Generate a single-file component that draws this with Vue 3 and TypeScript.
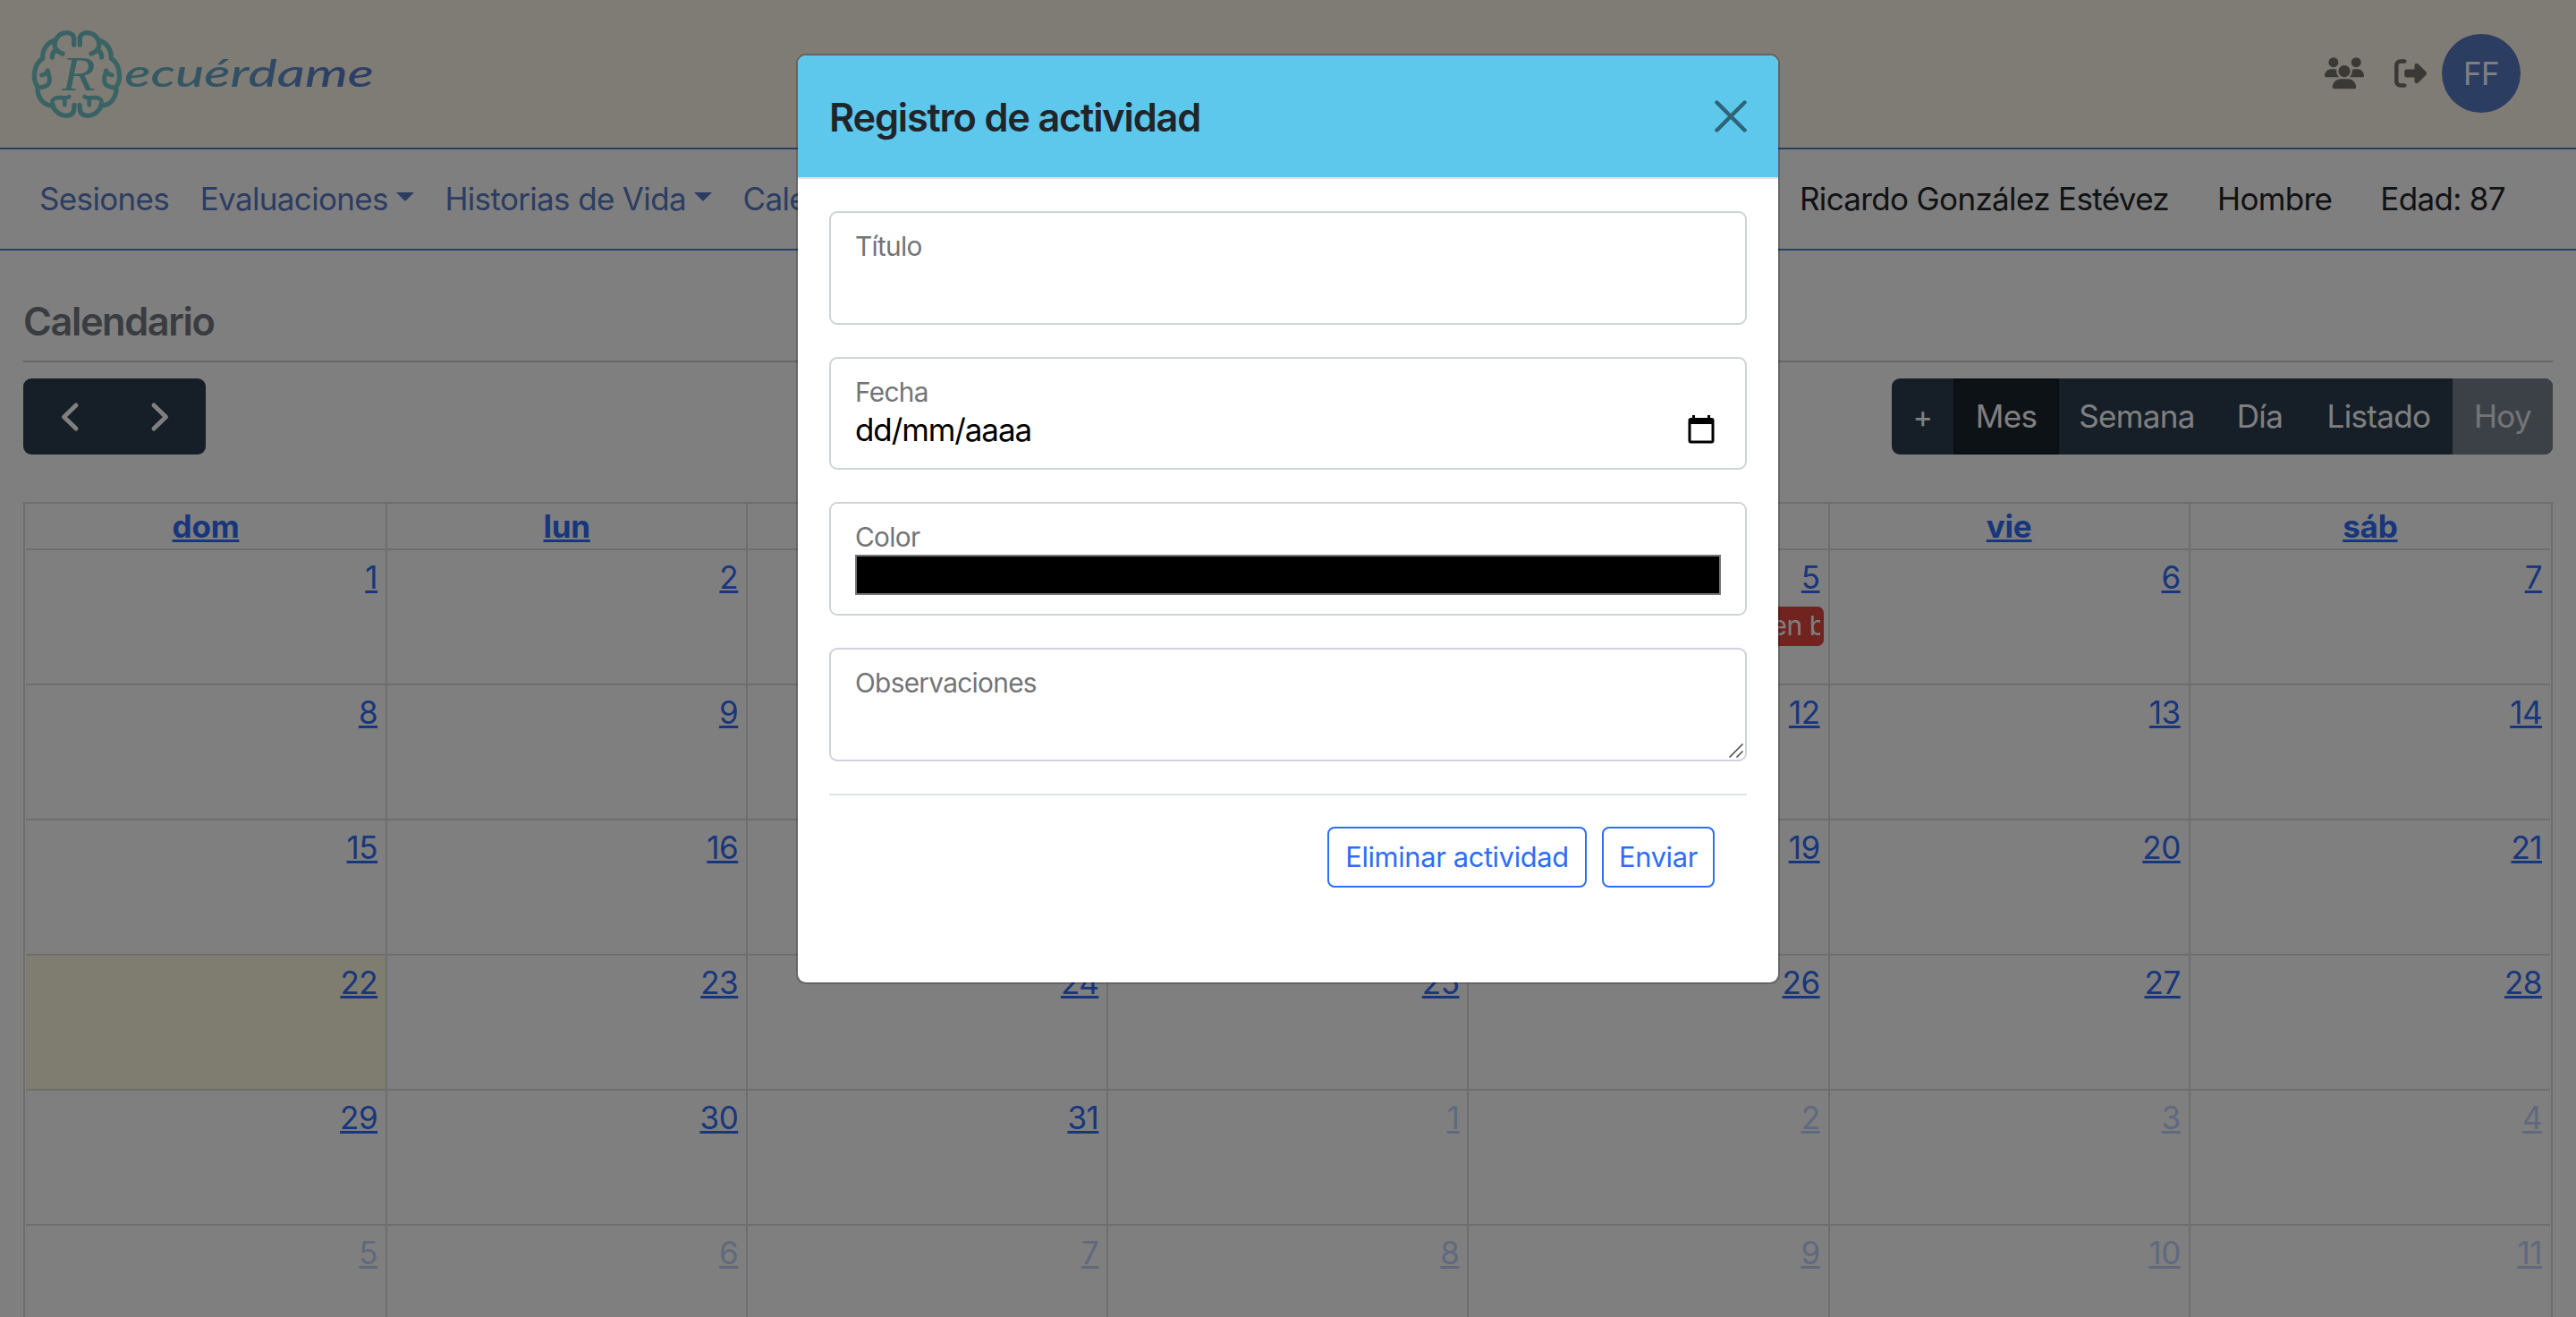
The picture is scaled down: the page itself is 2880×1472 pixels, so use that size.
<script setup lang="ts">
interface Day {
  n: number
  other?: boolean
  today?: boolean
  event?: string
}

const weekdays: string[] = ['dom', 'lun', 'mar', 'mié', 'jue', 'vie', 'sáb']

const weeks: Day[][] = Array.from({ length: 6 }, (_, w) =>
  Array.from({ length: 7 }, (_, d) => {
    const i = w * 7 + d + 1
    const day: Day = i > 31 ? { n: i - 31, other: true } : { n: i }
    if (i === 22) day.today = true
    if (i === 5) day.event = 'en b'
    return day
  }),
)

const views = [
  { label: '+', cls: 'v-add' },
  { label: 'Mes', cls: 'v-month' },
  { label: 'Semana', cls: 'v-week' },
  { label: 'Día', cls: 'v-day' },
  { label: 'Listado', cls: 'v-list' },
  { label: 'Hoy', cls: 'v-today' },
]
</script>

<template>
  <div class="page">
    <header class="top">
      <svg class="logo" viewBox="0 0 1290 495" width="430" height="165">
        <defs>
          <linearGradient id="brand" gradientUnits="userSpaceOnUse" x1="110" y1="0" x2="1250" y2="0">
            <stop offset="0" stop-color="#76cac8" />
            <stop offset="0.3" stop-color="#6cb8c8" />
            <stop offset="0.6" stop-color="#64a0c8" />
            <stop offset="0.9" stop-color="#5a7ccc" />
          </linearGradient>
          <g id="lobe">
            <path d="M248 150V128C246 104 202 102 187 134C158 142 142 166 143 196C112 216 108 268 126 290C124 330 146 352 174 354C192 384 214 392 234 386C247 382 248 372 249 352" stroke-width="16" />
            <path d="M185 140C180 156 187 172 210 180M186 168C178 176 174 184 175 192" stroke-width="16" />
            <path d="M140 252C152 248 158 246 160 236C162 250 168 258 166 270C166 284 152 292 132 294" stroke-width="15" />
            <path d="M232 324C226 334 200 322 184 330C172 336 174 346 180 356M217 330V352" stroke-width="14" />
          </g>
        </defs>
        <g fill="none" stroke="url(#brand)" stroke-linecap="round" stroke-linejoin="round">
          <use href="#lobe" />
          <use href="#lobe" transform="matrix(-1 0 0 1 516 0)" />
        </g>
        <text class="script initial" x="208" y="304" font-size="166" textLength="112" lengthAdjust="spacingAndGlyphs">R</text>
        <text class="script" x="418" y="292" font-size="126" textLength="836" lengthAdjust="spacingAndGlyphs">ecuérdame</text>
      </svg>
      <div class="tools">
        <svg class="users" viewBox="0 0 640 512" width="44" height="35.5"><path d="M144 0a80 80 0 1 1 0 160A80 80 0 1 1 144 0zM512 0a80 80 0 1 1 0 160A80 80 0 1 1 512 0zM0 298.7C0 239.8 47.8 192 106.7 192h42.7c15.9 0 31 3.5 44.6 9.7c-1.3 7.2-1.9 14.7-1.9 22.3c0 38.2 16.8 72.5 43.3 96c-.2 0-.4 0-.7 0H21.3C9.6 320 0 310.4 0 298.7zM405.3 320c-.2 0-.4 0-.7 0c26.6-23.5 43.3-57.8 43.3-96c0-7.6-.7-15-1.9-22.3c13.6-6.3 28.7-9.7 44.6-9.7h42.7C592.2 192 640 239.8 640 298.7c0 11.8-9.6 21.3-21.3 21.3H405.3zM224 224a96 96 0 1 1 192 0 96 96 0 1 1 -192 0zM128 485.3C128 411.7 187.7 352 261.3 352H378.7C452.3 352 512 411.7 512 485.3c0 14.7-11.9 26.7-26.7 26.7H154.7c-14.7 0-26.7-11.9-26.7-26.7z" /></svg>
        <svg class="exit" viewBox="0 0 512 512" width="36" height="36"><path d="M377.9 105.9L500.7 228.7c7.2 7.2 11.3 17.1 11.3 27.3s-4.1 20.1-11.3 27.3L377.9 406.1c-6.4 6.4-15 9.9-24 9.9c-18.7 0-33.9-15.2-33.9-33.9l0-62.1-128 0c-17.7 0-32-14.3-32-32l0-64c0-17.7 14.3-32 32-32l128 0 0-62.1c0-18.7 15.2-33.9 33.9-33.9c9 0 17.6 3.6 24 9.9zM160 96L96 96c-17.7 0-32 14.3-32 32l0 256c0 17.7 14.3 32 32 32l64 0c17.7 0 32 14.3 32 32s-14.3 32-32 32l-64 0c-53 0-96-43-96-96L0 128C0 75 43 32 96 32l64 0c17.7 0 32 14.3 32 32s-14.3 32-32 32z" /></svg>
        <span class="avatar">FF</span>
      </div>
    </header>

    <nav class="nav">
      <div class="links">
        <a>Sesiones</a>
        <a>Evaluaciones<i class="caret"></i></a>
        <a>Historias de Vida<i class="caret"></i></a>
        <a>Calendario</a>
      </div>
      <div class="patient">
        <span>Ricardo González Estévez</span>
        <span>Hombre</span>
        <span>Edad: 87</span>
      </div>
    </nav>

    <main class="content">
      <h5 class="title">Calendario</h5>
      <div class="toolbar">
        <div class="group steps">
          <svg viewBox="0 0 204 85" width="204" height="85"><path d="M59 30L45.500 43L59 56M146 30L159.500 43L146 56" /></svg>
        </div>
        <div class="group">
          <span v-for="v in views" :key="v.label" class="view" :class="v.cls">{{ v.label }}</span>
        </div>
      </div>

      <div class="calendar">
        <div class="row head">
          <div v-for="d in weekdays" :key="d" class="cell"><a>{{ d }}</a></div>
        </div>
        <div v-for="(week, w) in weeks" :key="w" class="row">
          <div v-for="(day, d) in week" :key="d" class="cell" :class="{ other: day.other, today: day.today }">
            <a>{{ day.n }}</a>
            <div v-if="day.event" class="event"><span>{{ day.event }}</span></div>
          </div>
        </div>
      </div>
    </main>

    <div class="backdrop">
      <section class="modal">
        <div class="modal-head">
          <h5>Registro de actividad</h5>
          <svg viewBox="0 0 36 36" width="36" height="36"><path d="M2.500 2.500L33.500 33.500M33.500 2.500L2.500 33.500" /></svg>
        </div>
        <div class="modal-body">
          <div class="field"><label>Título</label></div>
          <div class="field">
            <label>Fecha</label>
            <div class="date">
              <span>dd/mm/aaaa</span>
              <svg viewBox="0 0 30 32" width="30" height="32">
                <path fill-rule="evenodd" d="M5 0h3v3h14V0h3v3h1.500a3 3 0 0 1 3 3v22.500a3 3 0 0 1-3 3h-23a3 3 0 0 1-3-3V6a3 3 0 0 1 3-3H5zM3.500 10v18.500h23V10z" />
              </svg>
            </div>
          </div>
          <div class="field">
            <label>Color</label>
            <div class="swatch"></div>
          </div>
          <div class="field">
            <label>Observaciones</label>
            <svg class="grip" viewBox="0 0 16 16" width="16" height="16"><path d="M0.500 15.500L15.500 0.500M8.500 15.500L15.500 8.500" /></svg>
          </div>
          <div class="actions">
            <button type="button" class="b1">Eliminar actividad</button>
            <button type="button" class="b2">Enviar</button>
          </div>
        </div>
      </section>
    </div>
  </div>
</template>

<style>
body {
  overflow: hidden;
}
</style>

<style scoped>
.page {
  position: relative;
  box-sizing: border-box;
  width: 2880px;
  height: 1472px;
  overflow: hidden;
  background: #fff;
  color: #212529;
  font-family: Inter, "Liberation Sans", sans-serif;
  font-size: 35px;
  font-weight: 430;
  line-height: 54px;
  letter-spacing: -0.65px;
  white-space: nowrap;
}
.page * {
  box-sizing: border-box;
}
h5 {
  margin: 0;
  font-size: 43.300px;
  font-weight: 560;
  letter-spacing: -1.200px;
}

.top {
  display: flex;
  justify-content: space-between;
  height: 167px;
  background: #fff9ea;
  border-bottom: 2px solid #587ac4;
}
.logo {
  display: block;
}
.script {
  font-family: "Z003", "Segoe Script", "Brush Script MT", "Lato", sans-serif;
  font-style: italic;
  font-weight: 500;
  letter-spacing: 0;
  fill: url(#brand);
}
.initial {
  font-family: "Z003", "Liberation Serif", serif;
  font-weight: 400;
}
.tools {
  display: flex;
  align-items: center;
  height: 164px;
  padding-right: 62px;
  fill: #76726a;
}
.exit {
  margin: 0 17px 0 34px;
}
.avatar {
  width: 88px;
  height: 88px;
  border-radius: 50%;
  background: #587ac4;
  color: #fff;
  font-weight: 400;
  line-height: 89px;
  text-align: center;
}

.nav {
  display: flex;
  align-items: center;
  justify-content: space-between;
  height: 113px;
  padding: 0 79px 1px 44px;
  border-bottom: 2px solid #587ac4;
}
.links {
  display: flex;
  color: #587ac4;
}
.links a {
  display: flex;
  align-items: center;
  margin-right: 34.500px;
}
.caret {
  margin-left: 9px;
  border: 10.800px solid transparent;
  border-top-color: #587ac4;
  border-bottom: 0;
  transform: translateY(-2px);
}
.patient {
  display: flex;
  gap: 54px;
}

.content {
  padding: 0 26px;
}
.title {
  height: 125px;
  padding-top: 52px;
  border-bottom: 2px solid #cdcdcd;
  color: #727980;
  letter-spacing: -1.400px;
}
.toolbar {
  display: flex;
  justify-content: space-between;
  margin-top: 18px;
}
.group {
  display: flex;
  height: 85px;
  border-radius: 9px;
  overflow: hidden;
  background: #2c3e50;
  color: #fff;
}
.steps path {
  fill: none;
  stroke: #fff;
  stroke-width: 5;
  stroke-linecap: round;
  stroke-linejoin: round;
}
.view {
  line-height: 85px;
  text-align: center;
}
.v-add {
  width: 69px;
  font-size: 34px;
}
.v-month {
  width: 118px;
  background: #1a252f;
  border: 2px solid #151e27;
  line-height: 81px;
}
.v-week {
  width: 174px;
}
.v-day {
  width: 101px;
}
.v-list {
  width: 165px;
}
.v-today {
  width: 112px;
  background: #76828d;
  color: #e9ebed;
}

.calendar {
  margin-top: 53px;
  padding: 0 1px;
  border: 2px solid #ddd;
}
.row {
  display: grid;
  grid-template-columns: 404.100px repeat(5, 403.140px) 1fr;
  height: 151px;
  border-bottom: 2px solid #ddd;
}
.cell {
  min-width: 0;
  padding: 3px 9px 0 0;
  border-right: 2px solid #ddd;
  text-align: right;
  letter-spacing: -0.500px;
}
.cell:last-child {
  border-right: 0;
}
.cell a {
  color: #306cf8;
  text-decoration: underline;
  text-decoration-thickness: 3px;
  text-underline-offset: 2px;
  text-decoration-skip-ink: none;
}
.head {
  height: 52px;
}
.head .cell {
  padding: 0;
  line-height: 50px;
  font-weight: 700;
  text-align: center;
  letter-spacing: -0.200px;
}
.other a {
  opacity: 0.3;
}
.today {
  background: #fffbe0;
}
.event {
  height: 44px;
  margin: 6px -4px 0 4px;
  padding: 0 4px;
  border-radius: 7px;
  background: #e2463e;
  color: #fff;
  font-size: 30px;
  line-height: 43px;
}
.event span {
  display: block;
  width: 54px;
  margin-left: auto;
  overflow: hidden;
  text-align: left;
}

.backdrop {
  position: absolute;
  inset: 0;
  padding-top: 60px;
  background: rgba(0, 0, 0, 0.5);
}
.modal {
  width: 1100px;
  height: 1040px;
  margin: 0 auto;
  border: 2px solid rgba(0, 0, 0, 0.2);
  border-radius: 11px;
  background: #fff;
  background-clip: padding-box;
  overflow: hidden;
}
.modal-head {
  display: flex;
  align-items: center;
  justify-content: space-between;
  height: 138px;
  padding: 0 35px 0 35px;
  border-bottom: 2px solid #dee2e6;
  background: #5dc7ec;
}
.modal-head h5 {
  padding-top: 2px;
}
.modal-head path {
  fill: none;
  stroke: #2e6476;
  stroke-width: 4.400;
  stroke-linecap: round;
}
.modal-body {
  padding: 36px 35px;
}
.field {
  position: relative;
  height: 126.700px;
  margin-bottom: 36px;
  padding: 21px 27px 0;
  border: 2px solid #ced4da;
  border-radius: 9px;
}
label {
  display: block;
  height: 36px;
  color: #737477;
  font-size: 29.800px;
  line-height: 32px;
  letter-spacing: -0.700px;
}
.date {
  display: flex;
  align-items: center;
  justify-content: space-between;
  height: 44px;
  padding-right: 7px;
  color: #000;
  letter-spacing: -1.100px;
}
.swatch {
  height: 45px;
  border: 2px solid #767676;
  background: #000;
}
.grip {
  position: absolute;
  right: 2px;
  bottom: 2px;
  fill: none;
  stroke: #444;
  stroke-width: 1.500;
}
.actions {
  display: flex;
  justify-content: flex-end;
  gap: 17px;
  padding: 35px 36px 0 0;
  border-top: 2px solid #dee2e6;
}
button {
  height: 68px;
  padding: 0;
  border: 2px solid #306cf8;
  border-radius: 8px;
  background: #fff;
  color: #306cf8;
  font: inherit;
  font-size: 30.800px;
  letter-spacing: -0.350px;
}
.b1 {
  width: 290px;
}
.b2 {
  width: 126px;
}
</style>
